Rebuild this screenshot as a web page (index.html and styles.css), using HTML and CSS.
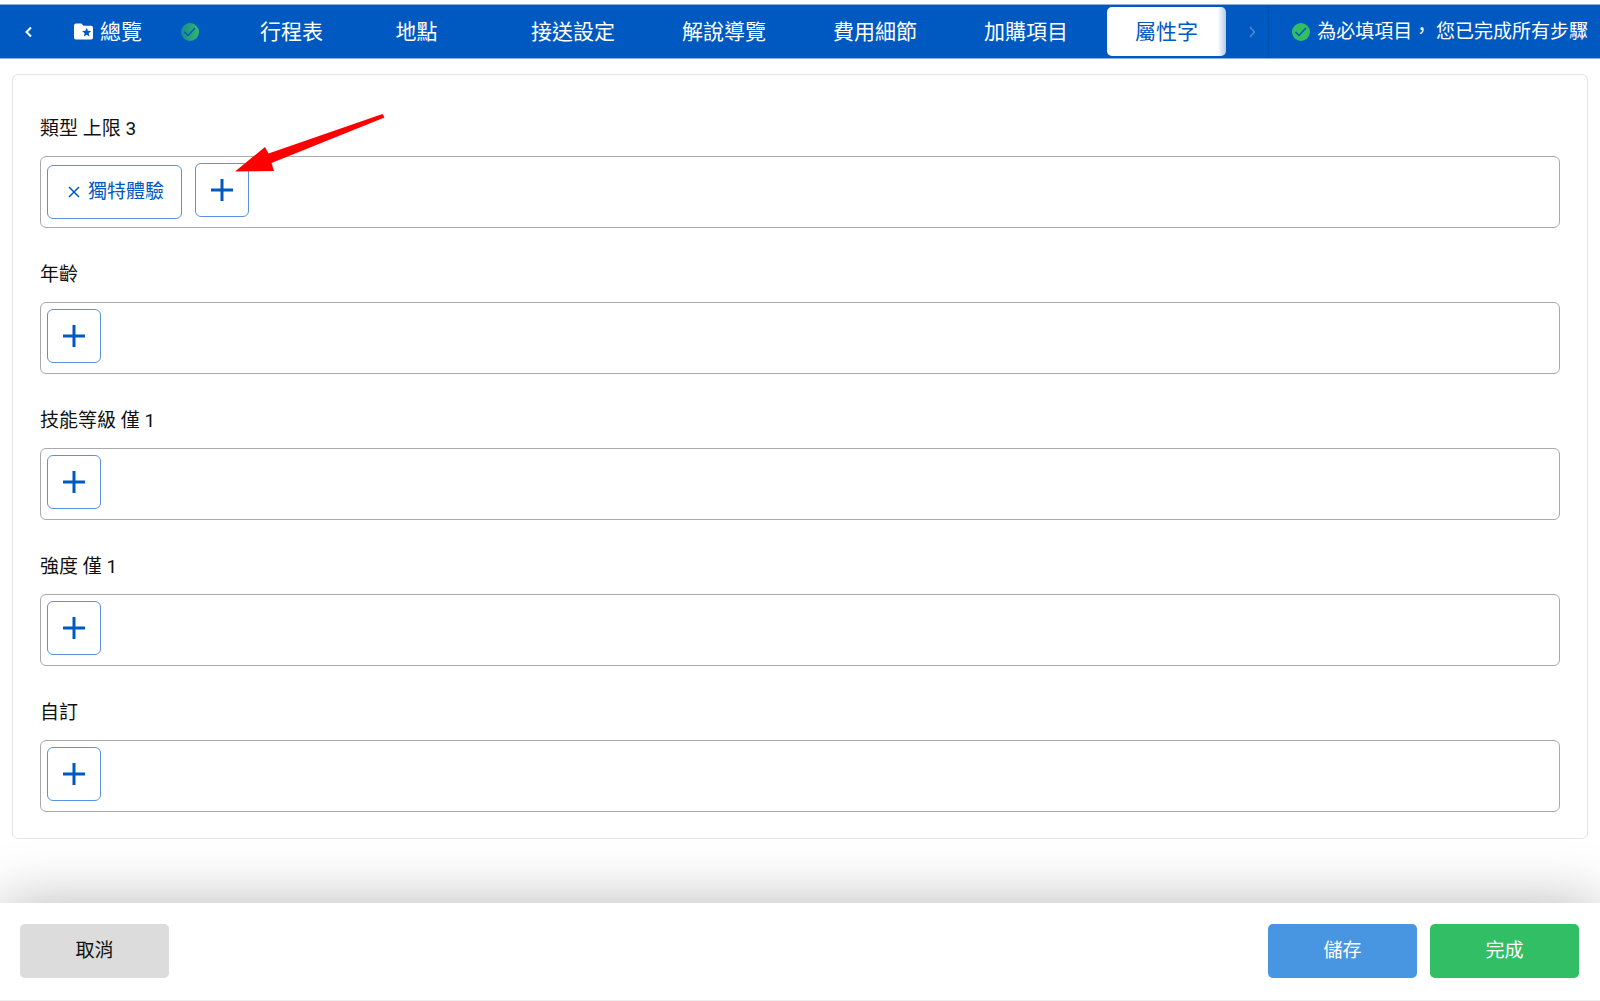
FILE: index.html
```html
<!DOCTYPE html>
<html lang="zh-Hant">
<head>
    <meta charset="UTF-8">
    <meta name="viewport" content="width=device-width, initial-scale=1.0">
    <title>屬性字</title>
    <link rel="stylesheet" href="styles.css">
</head>
<body>

    <!-- Step navigation -->
    <header class="topbar">
        <button class="scroll-btn" type="button" aria-label="上一頁">
            <svg class="chevron" viewBox="0 0 12 12"><path d="M8 1.500 3.500 6 8 10.500"/></svg>
        </button>
        <nav class="tabs">
            <a href="#overview" class="tab tab-overview">
                <svg class="folder" viewBox="0 0 18 16"><path fill="#fff" d="M2 0.500h5l2 2h7.200a1.800 1.800 0 0 1 1.800 1.800v9.400a1.800 1.800 0 0 1-1.800 1.800H1.800A1.800 1.800 0 0 1 0 13.700V2.500a2 2 0 0 1 2-2z"/><path fill="#0059c0" d="m12 4.500 1.200 2.900 3.100.2-2.400 2 .8 3.100-2.700-1.700-2.700 1.700.8-3.100-2.400-2 3.100-.2z"/></svg>
                <span>總覽</span>
                <svg class="check check-faded" viewBox="0 0 18 18">
                    <defs>
                        <linearGradient id="fade"><stop offset="0" stop-color="#188991"/><stop offset="1" stop-color="#30bb67"/></linearGradient>
                    </defs>
                    <circle cx="9" cy="9" r="9" fill="url(#fade)" stroke="none"/><path d="m3.500 9 3.500 3.500 7-7.500"/>
                </svg>
            </a>
            <a href="#itinerary" class="tab">行程表</a>
            <a href="#places" class="tab tab-places">地點</a>
            <a href="#pickup" class="tab">接送設定</a>
            <a href="#guide" class="tab">解說導覽</a>
            <a href="#fees" class="tab">費用細節</a>
            <a href="#addons" class="tab">加購項目</a>
            <a href="#tags" class="tab active">屬性字</a>
        </nav>
        <button class="scroll-btn scroll-next" type="button" aria-label="下一頁" disabled>
            <svg class="chevron" viewBox="0 0 12 12"><path d="M4 1 8.500 6 4 11"/></svg>
        </button>
        <p class="status">
            <svg class="check" viewBox="0 0 18 18"><circle cx="9" cy="9" r="9" fill="#32be64" stroke="none"/><path d="m3.500 9 3.500 3.500 7-7.500"/></svg>
            <span>為必填項目， 您已完成所有步驟</span>
        </p>
    </header>

    <!-- Tag groups -->
    <main class="card">
        <section class="group">
            <h2>類型 上限 3</h2>
            <div class="box">
                <button class="chip" type="button">
                    <svg class="cross" viewBox="0 0 12 12"><path d="m1 1 10 10M11 1 1 11"/></svg>
                    <span>獨特體驗</span>
                </button>
                <button class="add" type="button" aria-label="新增類型"><svg class="plus" viewBox="0 0 22 22"><path d="M11 0v22M0 11h22"/></svg></button>
                <svg class="arrow" viewBox="0 0 150 58"><path d="M0 57.500 30 33l3.500 6.500L147.500 0l2 3.500L36.500 49l2.500 8z"/></svg>
            </div>
        </section>
        <section class="group">
            <h2>年齡</h2>
            <div class="box">
                <button class="add" type="button" aria-label="新增年齡"><svg class="plus" viewBox="0 0 22 22"><path d="M11 0v22M0 11h22"/></svg></button>
            </div>
        </section>
        <section class="group">
            <h2>技能等級 僅 1</h2>
            <div class="box">
                <button class="add" type="button" aria-label="新增技能等級"><svg class="plus" viewBox="0 0 22 22"><path d="M11 0v22M0 11h22"/></svg></button>
            </div>
        </section>
        <section class="group">
            <h2>強度 僅 1</h2>
            <div class="box">
                <button class="add" type="button" aria-label="新增強度"><svg class="plus" viewBox="0 0 22 22"><path d="M11 0v22M0 11h22"/></svg></button>
            </div>
        </section>
        <section class="group">
            <h2>自訂</h2>
            <div class="box">
                <button class="add" type="button" aria-label="新增自訂"><svg class="plus" viewBox="0 0 22 22"><path d="M11 0v22M0 11h22"/></svg></button>
            </div>
        </section>
    </main>

    <!-- Actions -->
    <footer class="actions">
        <button class="btn btn-cancel" type="button">取消</button>
        <button class="btn btn-save" type="button">儲存</button>
        <button class="btn btn-done" type="button">完成</button>
    </footer>

</body>
</html>
```

FILE: styles.css
```css
* {
    margin: 0;
    padding: 0;
    box-sizing: border-box;
}

body {
    min-height: 100vh;
    display: flex;
    flex-direction: column;
    padding-top: 4px;
    background: #fff;
    color: #111;
    font-family: Roboto, "Noto Sans CJK TC", sans-serif;
    font-size: 19px;
    line-height: 28px;
}

button {
    font: inherit;
    cursor: pointer;
}

svg {
    display: block;
    flex-shrink: 0;
}

/* Step navigation */
.topbar {
    display: flex;
    align-items: stretch;
    height: 55px;
    border: solid #8fb0de;
    border-width: 1px 0;
    background: #0059c0;
    color: #fff;
}

.scroll-btn {
    width: 46px;
    display: flex;
    align-items: center;
    justify-content: center;
    padding-left: 12px;
    background: none;
    border: none;
    color: #fff;
}

.scroll-next {
    width: 43px;
    padding-left: 10px;
    color: #4a8ad6;
    border-right: 1px solid #0051b0;
}

.chevron {
    width: 12px;
    height: 12px;
    fill: none;
    stroke: currentColor;
    stroke-width: 2;
}

.scroll-next .chevron {
    stroke-width: 1.5;
}

.tabs {
    flex: 1;
    display: flex;
    align-items: center;
    gap: 11px;
    white-space: nowrap;
}

.tab {
    display: flex;
    align-items: center;
    justify-content: center;
    height: 49px;
    padding: 0 28px;
    border-radius: 5px;
    color: #fff;
    font-size: 21px;
    text-decoration: none;
}

.tab-overview {
    gap: 7px;
    padding-right: 22px;
}

.tab-places {
    width: 109px;
    margin-right: 21px;
}

.tab.active {
    background: linear-gradient(to right, #fff 93%, #b3cbea);
    color: #0059c0;
}

.folder {
    width: 19px;
    height: 17px;
}

.check {
    width: 18px;
    height: 18px;
    fill: none;
    stroke: #0059c0;
    stroke-width: 1.5;
}

.check-faded {
    margin-left: 32px;
}

.status {
    display: flex;
    align-items: center;
    gap: 7px;
    padding: 0 12px 0 23px;
    white-space: nowrap;
}

/* Tag groups */
.card {
    margin: 15px 12px 64px;
    padding: 40px 27px 26px;
    border: 1px solid #e4e4e4;
    border-radius: 6px;
}

.group + .group {
    margin-top: 33px;
}

.group h2 {
    margin-bottom: 13px;
    font-size: 19px;
    font-weight: 400;
}

.box {
    position: relative;
    display: flex;
    align-items: flex-start;
    gap: 13px;
    height: 72px;
    padding: 6px;
    border: 1px solid #aaa;
    border-radius: 6px;
}

.chip,
.add {
    display: flex;
    align-items: center;
    justify-content: center;
    height: 54px;
    background: #fff;
    border: 1px solid #5b92dc;
    border-radius: 6px;
    color: #0059c0;
}

.chip {
    gap: 8px;
    margin-top: 2px;
    padding: 0 17px 0 20px;
}

.add {
    width: 54px;
}

.cross {
    width: 12px;
    height: 12px;
    stroke: currentColor;
    stroke-width: 1.5;
}

.plus {
    width: 22px;
    height: 22px;
    stroke: currentColor;
    stroke-width: 3;
}

/* Pointer drawn over the first add button */
.arrow {
    position: absolute;
    left: 194px;
    top: -43px;
    width: 150px;
    height: 58px;
    fill: #f00;
    pointer-events: none;
}

/* Actions */
.actions {
    flex: 1;
    display: flex;
    align-items: flex-start;
    gap: 13px;
    padding: 21px 21px 22px 20px;
    background: #fff;
    border-bottom: 1px solid #eee;
    box-shadow: 0 0 60px rgba(0, 0, 0, 0.28);
}

.btn {
    width: 149px;
    height: 54px;
    border: none;
    border-radius: 5px;
}

.btn-cancel {
    margin-right: auto;
    background: #dcdcdc;
    color: #111;
}

.btn-save {
    background: #4896e1;
    color: #fff;
}

.btn-done {
    background: #32be64;
    color: #fff;
}
```
